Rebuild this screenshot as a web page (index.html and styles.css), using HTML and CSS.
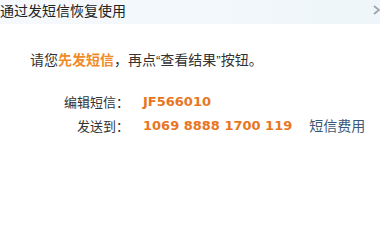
FILE: index.html
```html
<!DOCTYPE html>
<html>
<head>
<meta charset="utf-8">
<link rel="stylesheet" href="styles.css">
</head>
<body>
<div class="dialog">
  <div class="header">
    <span class="title">通过发短信恢复使用</span>
    <svg class="close" width="7" height="10" viewBox="0 0 7 10"><path d="M1 1 L6 5 L1 9" fill="none" stroke="#a0a4a8" stroke-width="1.8"/></svg>
  </div>
  <div class="body">
    <p class="tip">请您<b class="hl">先发短信</b>，再点<span class="q">“</span>查看结果<span class="q">”</span>按钮。</p>
    <div class="rows">
      <div class="row">
        <span class="label">编辑短信：</span>
        <span class="value">JF566010</span>
      </div>
      <div class="row">
        <span class="label">发送到：</span>
        <span class="value">1069 8888 1700 119</span>
        <a class="link">短信费用</a>
      </div>
    </div>
  </div>
</div>
</body>
</html>
```
FILE: styles.css
```css
html, body {
  margin: 0;
  padding: 0;
  background: #fff;
}
body {
  width: 380px;
  height: 240px;
  overflow: hidden;
  font-family: "Noto Sans CJK SC", "Liberation Sans", sans-serif;
  color: #333;
}
.dialog {
  width: 380px;
}
.header {
  height: 24px;
  display: flex;
  align-items: flex-start;
  justify-content: space-between;
  background: linear-gradient(to right, #f6f9fc, #eef6fa);
  overflow: hidden;
}
.title {
  font-size: 14px;
  line-height: 20px;
  color: #222;
}
.close {
  margin-top: 5px;
}
.body {
  padding: 26px 0 0 30px;
}
.tip {
  margin: 0;
  font-size: 14px;
  line-height: 18px;
  color: #333;
}
.q {
  font-family: "Liberation Sans", sans-serif;
  font-size: 13px;
}
.hl {
  color: #f08a28;
  font-weight: bold;
}
.rows {
  margin-top: 22px;
  display: flex;
  flex-direction: column;
  gap: 6px;
}
.row {
  display: flex;
  align-items: center;
  height: 18px;
}
.label {
  width: 99px;
  text-align: right;
  font-size: 13px;
  color: #333;
}
.value {
  margin-left: 14px;
  font-family: "DejaVu Sans", sans-serif;
  font-weight: bold;
  font-size: 13px;
  color: #e8761f;
}
.link {
  margin-left: 17px;
  font-size: 14px;
  color: #3b5878;
}
```
